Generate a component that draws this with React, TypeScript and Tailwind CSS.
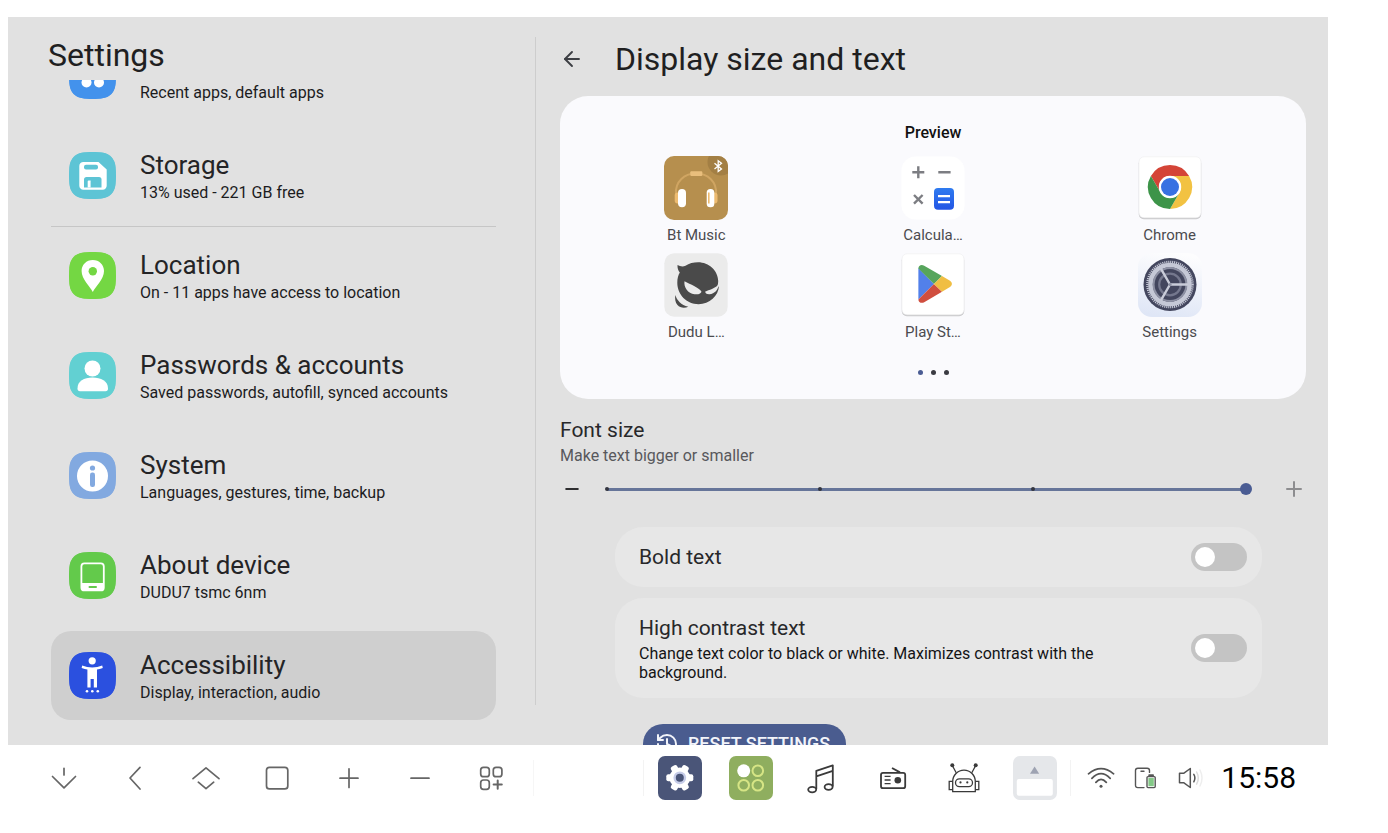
// App.tsx
import { useState, type ReactNode } from "react";
import { ArrowLeft, History, Minus, Plus } from "lucide-react";

/* ---------- Sidebar icons (47 x 47 tiles) ---------- */

const Tile = ({ color, children }: { color: string; children: ReactNode }) => (
  <svg viewBox="0 0 47 47" className="w-[47px] h-[47px] shrink-0" aria-hidden="true">
    <path
      d="M0 23.5C0 5 5 0 23.5 0S47 5 47 23.5 42 47 23.5 47 0 42 0 23.5Z"
      fill={color}
    />
    <rect x="0.5" y="0.5" width="46" height="46" rx="15" fill={color} />
    {children}
  </svg>
);

const AppsIcon = () => (
  <Tile color="#4392ec">
    <g fill="#fff">
      <circle cx="17.5" cy="17.5" r="5" />
      <circle cx="30" cy="17.5" r="5" />
      <circle cx="17.5" cy="30.5" r="5" />
      <circle cx="30" cy="30.5" r="5" />
    </g>
  </Tile>
);

const StorageIcon = () => (
  <Tile color="#5dc4d5">
    <path
      d="M14.5 10H29.5L37.7 17.5V33.5A4 4 0 0 1 33.7 37.7H14.5A4 4 0 0 1 10.3 33.5V14A4 4 0 0 1 14.5 10Z"
      fill="#fff"
    />
    <rect x="15" y="12.7" width="14" height="4.8" rx="2" fill="#5dc4d5" />
    <path d="M15 35.6V27.5Q15 25 17.5 25H30Q32.5 25 32.5 27.5V35.6Z" fill="#5dc4d5" />
    <path d="M18.7 35.6V29.5Q18.7 28.6 19.6 28.6H21.6V35.6Z" fill="#fff" />
  </Tile>
);

const LocationIcon = () => (
  <Tile color="#74d743">
    <path
      d="M23.8 8C17.4 8 12.6 12.8 12.6 19C12.6 27 21 34.5 23.8 40C26.6 34.5 35 27 35 19C35 12.8 30.2 8 23.8 8Z"
      fill="#fff"
    />
    <circle cx="23.8" cy="19.2" r="4.2" fill="#74d743" />
  </Tile>
);

const AccountIcon = () => (
  <Tile color="#62d0d2">
    <circle cx="23.5" cy="16.5" r="8" fill="#fff" />
    <path
      d="M8.5 36.5C8.5 29 15 25.5 23.5 25.5S39 29 39 36.5Q39 39.3 36.5 39.3H11Q8.5 39.3 8.5 36.5Z"
      fill="#fff"
    />
  </Tile>
);

const InfoIcon = () => (
  <Tile color="#82a9e0">
    <circle cx="23.5" cy="24" r="15.5" fill="#fff" />
    <circle cx="23.5" cy="16" r="2.6" fill="#82a9e0" />
    <rect x="21" y="20.5" width="5" height="14.5" rx="2.2" fill="#82a9e0" />
  </Tile>
);

const DeviceIcon = () => (
  <Tile color="#63ca4b">
    <rect x="12.4" y="11.4" width="22.4" height="27" rx="3" fill="#63ca4b" stroke="#fff" strokeWidth="1.8" />
    <path d="M12.4 31H34.8V36Q34.8 39 32 39H15.2Q12.4 39 12.4 36Z" fill="#fff" />
    <rect x="19.5" y="34" width="8.5" height="2" rx="1" fill="#63ca4b" />
  </Tile>
);

const AccessibilityIcon = () => (
  <Tile color="#2b50df">
    <g fill="#fff">
      <circle cx="23.2" cy="8.8" r="3.6" />
      <path d="M13.2 13.5Q18 15.6 23.2 15.6T33.2 13.5L33.8 15.9Q30.5 17.2 28 17.6V35.5H24.8V27H21.6V35.5H18.4V17.6Q15.9 17.2 12.6 15.9Z" />
      <circle cx="18" cy="39.3" r="1.3" />
      <circle cx="23.3" cy="39.3" r="1.3" />
      <circle cx="28.8" cy="39.3" r="1.3" />
    </g>
  </Tile>
);

/* ---------- Launcher preview icons (64 x 64) ---------- */

const BtMusic = () => (
  <svg viewBox="0 0 64 64" className="w-16 h-16" aria-hidden="true">
    <defs>
      <clipPath id="bt-clip">
        <rect width="64" height="64" rx="10" />
      </clipPath>
    </defs>
    <g clipPath="url(#bt-clip)">
      <rect width="64" height="64" fill="#b68f4e" />
      <circle cx="57" cy="6" r="13.5" fill="#a37f44" />
    </g>
    <path d="M12 38C11 26 20 17.6 32 17.6S53 26 52 38" fill="none" stroke="#d0a562" strokeWidth="2" />
    <rect x="26.3" y="15.3" width="12" height="4.7" rx="1" fill="#e9be7c" />
    <rect x="10.7" y="36.5" width="6" height="11" rx="3" fill="#edbb70" />
    <rect x="47.5" y="36.5" width="6" height="11" rx="3" fill="#edbb70" />
    <rect x="14" y="33" width="8" height="18.3" rx="4" fill="#fff" />
    <rect x="42.7" y="33" width="7.6" height="18.3" rx="3.6" fill="#fff" />
    <rect x="44" y="36.5" width="1.6" height="11" fill="#edbb70" />
    <path d="M50.5 7.2L57.5 13L54.2 15.5V4.8L57.5 7.3L50.5 13" fill="none" stroke="#fff" strokeWidth="1.3" />
  </svg>
);

const Calculator = () => (
  <svg viewBox="0 0 64 64" className="w-16 h-16" aria-hidden="true">
    <defs>
      <linearGradient id="calc" x1="0" y1="0" x2="0" y2="1">
        <stop offset="0" stopColor="#2f7bf0" />
        <stop offset="1" stopColor="#2355e4" />
      </linearGradient>
    </defs>
    <rect x="0.5" y="0.5" width="63" height="63" rx="14" fill="#fff" />
    <g stroke="#7c7d82" strokeWidth="2.4" fill="none">
      <path d="M11.3 16.3H23.3M17.3 10.3V22.3M37.3 16.3H49.6" />
      <path d="M13 39L21.6 47.6M21.6 39L13 47.6" />
    </g>
    <rect x="33" y="32" width="20" height="21.8" rx="4" fill="url(#calc)" />
    <path d="M37 40.2H49M37 46.2H49" stroke="#fff" strokeWidth="2.2" />
  </svg>
);

const WhiteCard = ({ children }: { children: ReactNode }) => (
  <svg viewBox="0 0 64 64" className="w-16 h-16" aria-hidden="true">
    <rect x="0.8" y="2.2" width="62.4" height="61" rx="5" fill="#c9c9cb" />
    <rect x="1" y="0.8" width="62" height="61" rx="5" fill="#fff" stroke="#ececee" strokeWidth="0.6" />
    {children}
  </svg>
);

const Chrome = () => (
  <WhiteCard>
    <path d="M12.9 20A22 22 0 0 1 51.1 20L32 20A11 11 0 0 0 22.5 36.5Z" fill="#d44437" />
    <path d="M51.1 20A22 22 0 0 1 32 53L41.5 36.5A11 11 0 0 0 32 20Z" fill="#f2c242" />
    <path d="M32 53A22 22 0 0 1 12.9 20L22.5 36.5A11 11 0 0 0 41.5 36.5Z" fill="#3d9449" />
    <circle cx="32" cy="31" r="11.2" fill="#fff" />
    <circle cx="32" cy="31" r="9" fill="#3871e2" />
  </WhiteCard>
);

const PlayStore = () => (
  <WhiteCard>
    <path d="M17.4 15V46.6L33 31Z" fill="#5280ea" />
    <path d="M17.4 15.5C17.4 12.5 20.5 11.2 23.2 12.8L41 23L33 31Z" fill="#57a55c" />
    <path d="M17.4 46.4C17.4 49.4 20.5 50.8 23.2 49.2L41 38.8L33 31Z" fill="#d04e3f" />
    <path d="M41 23L49 27.8C51.5 29.3 51.5 32.5 49 34L41 38.8L33 31Z" fill="#f0be43" />
  </WhiteCard>
);

const DuduLauncher = () => (
  <svg viewBox="0 0 64 64" className="w-16 h-16" aria-hidden="true">
    <rect x="0.3" y="0.3" width="63.4" height="63.4" rx="10" fill="#ebebeb" />
    <path
      d="M13.5 12C16 13.5 19 13.8 21.5 12.8C25 10.2 29.5 9.2 34 9.2C45 9.2 54 17.5 54.2 28C54.3 32 53 34.8 50.5 36.5C52.8 36 54.3 34.5 55 32.8C54.5 43 45.5 51.2 34.5 51.2C22.5 51.2 13.5 41.5 13.3 30C13.2 25.5 14.3 22 15.8 19.5C14.2 17.5 13.3 15 13.5 12Z"
      fill="#4a4a4a"
    />
    <path d="M20.5 28.3C27 31.5 34 34.5 37.3 38.2C37.8 40.5 34 41.6 30.5 41.2C24 40.5 19.5 34.5 20.5 28.3Z" fill="#ebebeb" />
    <path d="M41.3 38.5C45 37 51 35.5 54.6 31.5C54.5 36.5 50.5 41 45.5 41.2C42.5 41.3 41 40 41.3 38.5Z" fill="#ebebeb" />
    <path d="M11.3 42C13 47.5 17 51.8 24.3 53.8C20.5 55.5 16 55 13.5 52C11.2 49.5 10.8 45.5 11.3 42Z" fill="#4a4a4a" />
  </svg>
);

const SettingsApp = () => (
  <svg viewBox="0 0 64 64" className="w-16 h-16" aria-hidden="true">
    <defs>
      <linearGradient id="set-bg" x1="0.6" y1="0" x2="0.4" y2="1">
        <stop offset="0" stopColor="#fdfdfe" />
        <stop offset="1" stopColor="#dfe6f6" />
      </linearGradient>
    </defs>
    <rect width="64" height="64" rx="14" fill="url(#set-bg)" />
    <circle cx="32" cy="31.5" r="26.5" fill="#43465e" />
    <circle cx="32" cy="31.5" r="22.6" fill="none" stroke="#c5c8d6" strokeWidth="2.4" strokeDasharray="1.1 0.9" />
    <circle cx="32" cy="31.5" r="19.5" fill="none" stroke="#c5c8d6" strokeWidth="4.6" />
    <circle cx="32" cy="31.5" r="17.4" fill="#8d90a3" />
    <circle cx="32" cy="31.5" r="15.4" fill="#43465e" />
    <circle cx="32" cy="31.5" r="10.8" fill="none" stroke="#74778d" strokeWidth="2.2" />
    <path d="M32 31.5H50M32 31.5L23 15.9M32 31.5L23 47.1" stroke="#c9ccd9" strokeWidth="2.4" />
    <circle cx="32" cy="31.5" r="1.6" fill="#8d90a3" />
  </svg>
);

/* ---------- Taskbar icons ---------- */

const NavSvg = ({ children }: { children: ReactNode }) => (
  <svg
    viewBox="0 1 48 48"
    className="w-12 h-12"
    fill="none"
    stroke="#666"
    strokeWidth="1.7"
    strokeLinecap="round"
    strokeLinejoin="round"
    aria-hidden="true"
  >
    {children}
  </svg>
);

const NAV = [
  { label: "Hide bar", icon: <path d="M12.5 23.5L24 34.8L35.5 23.5M24 15.3V22" /> },
  { label: "Back", icon: <path d="M29 14.3L19 25L29 36" /> },
  { label: "Home", icon: <path d="M11 25.7L24 14.8L37 25.7M16.3 29.2L24 35.6L31.7 29.2" /> },
  { label: "Recents", icon: <rect x="13.5" y="14.3" width="21.3" height="21.6" rx="3" /> },
  { label: "Volume up", icon: <path d="M15 25.2H33M24 15.8V34.4" /> },
  { label: "Volume down", icon: <path d="M15 25.2H33" /> },
  {
    label: "All apps",
    icon: (
      <>
        <rect x="13.7" y="14.3" width="8.6" height="9.4" rx="2.8" />
        <rect x="26.3" y="14.3" width="8.6" height="9.4" rx="2.8" />
        <rect x="13.7" y="27" width="8.6" height="9.4" rx="2.8" />
        <path d="M26.6 31.6H34.8M30.7 27.5V35.7" strokeWidth="2" />
      </>
    ),
  },
];

const DockGear = () => (
  <svg viewBox="0 0 44 44" className="w-11 h-11" aria-hidden="true">
    <rect width="44" height="44" rx="7" fill="#4a5578" />
    <g fill="#fff">
      <circle cx="21.8" cy="21.8" r="10.3" />
      <rect x="8.3" y="18.3" width="27" height="7" rx="2" />
      <rect x="8.3" y="18.3" width="27" height="7" rx="2" transform="rotate(60 21.8 21.8)" />
      <rect x="8.3" y="18.3" width="27" height="7" rx="2" transform="rotate(120 21.8 21.8)" />
    </g>
    <circle cx="21.8" cy="21.8" r="5.2" fill="#4a5578" stroke="#c6cce8" strokeWidth="2.4" />
  </svg>
);

const DockApps = () => (
  <svg viewBox="0 0 44 44" className="w-11 h-11" aria-hidden="true">
    <rect width="44" height="44" rx="7" fill="#8fae5f" />
    <circle cx="14.7" cy="14.8" r="6.5" fill="#fff" />
    <g fill="none" stroke="#d6e585" strokeWidth="2">
      <circle cx="28.8" cy="14.8" r="5.3" />
      <circle cx="14.7" cy="29.2" r="5.3" />
      <circle cx="28.8" cy="29.2" r="5.3" />
    </g>
  </svg>
);

const DockMusic = () => (
  <svg viewBox="0 0 48 48" className="w-12 h-12" fill="none" stroke="#3a3a3a" strokeWidth="1.8" strokeLinejoin="round" aria-hidden="true">
    <path d="M18.3 35V16.8L34.8 11.3V32.6M18.3 22.3L34.8 16.8" />
    <ellipse cx="14.2" cy="35.6" rx="4" ry="2.8" />
    <ellipse cx="30.6" cy="33" rx="4" ry="2.8" />
  </svg>
);

const DockRadio = () => (
  <svg viewBox="0 0 48 48" className="w-12 h-12" fill="none" stroke="#3a3a3a" strokeWidth="1.8" aria-hidden="true">
    <rect x="12" y="18.8" width="24.2" height="15.4" rx="2" />
    <path d="M23 14L31 18.4" />
    <path d="M15.6 22.3H21.6M15.6 26H21.6M15.6 29.7H21.6" strokeWidth="1.3" />
    <circle cx="28.8" cy="26.3" r="3.3" fill="#3a3a3a" stroke="none" />
  </svg>
);

const DockRobot = () => (
  <svg viewBox="0 0 48 48" className="w-12 h-12" fill="none" stroke="#3a3a3a" strokeWidth="1.3" aria-hidden="true">
    <path d="M12.7 37.7V27.5A11.3 11.3 0 0 1 35.3 27.5V37.7Z" />
    <path d="M12.3 11.5L16.2 18.8M35.7 11.5L31.8 18.8" />
    <circle cx="12.3" cy="11.3" r="2" fill="#3a3a3a" stroke="none" />
    <circle cx="35.7" cy="11.3" r="2" fill="#3a3a3a" stroke="none" />
    <rect x="15.5" y="24.8" width="17" height="7.8" rx="3.9" />
    <circle cx="20.5" cy="28.4" r="1.1" fill="#3a3a3a" stroke="none" />
    <circle cx="27.3" cy="28.4" r="1.1" fill="#3a3a3a" stroke="none" />
    <path d="M12.7 27.3H9.2V35.6H12.7M35.3 27.3H38.8V35.6H35.3" />
  </svg>
);

const DockDrawer = () => (
  <svg viewBox="0 0 44 44" className="w-11 h-11" aria-hidden="true">
    <rect width="44" height="44" rx="7" fill="#e5e7ea" />
    <rect x="3.8" y="23" width="36" height="16.8" rx="2" fill="#fff" />
    <path d="M21.6 10.5L26.2 17.8H17Z" fill="#9ea3b2" />
  </svg>
);

const DOCK = [
  { label: "Settings", icon: <DockGear /> },
  { label: "App grid", icon: <DockApps /> },
  { label: "Music", icon: <DockMusic /> },
  { label: "Radio", icon: <DockRadio /> },
  { label: "Assistant", icon: <DockRobot /> },
  { label: "Drawer", icon: <DockDrawer /> },
];

const WifiIcon = () => (
  <svg viewBox="0 0 28 28" className="w-7 h-7" fill="none" stroke="#555" strokeWidth="1.7" strokeLinecap="round" aria-hidden="true">
    <path d="M1.5 9.8Q14 -0.6 26.6 9.8M4.9 14.3Q14 4.8 23.2 14.3M8.9 18.4Q14 12.2 19.3 18.4" />
    <circle cx="14" cy="22.3" r="1.5" fill="#555" stroke="none" />
  </svg>
);

const PhoneBatteryIcon = () => (
  <svg viewBox="0 0 24 28" className="w-6 h-7" fill="none" stroke="#555" strokeWidth="1.4" strokeLinecap="round" aria-hidden="true">
    <path d="M11 23.6H4.8Q2.5 23.6 2.5 21.3V6.5Q2.5 4.2 4.8 4.2H14.2Q16.5 4.2 16.5 6.5V8.4M8 7.2H11" />
    <path d="M16.2 11.2H20" strokeWidth="2" />
    <rect x="14" y="12.6" width="8.2" height="11" rx="1" />
    <rect x="15.4" y="14" width="5.4" height="8.2" fill="#83c987" stroke="none" />
  </svg>
);

const VolumeIcon = () => (
  <svg viewBox="0 0 28 28" className="w-7 h-7" fill="none" stroke="#555" strokeWidth="1.5" strokeLinecap="round" strokeLinejoin="round" aria-hidden="true">
    <path d="M4.5 9.3H8.6L15.3 4.5V23.5L8.6 18.7H4.5Z" />
    <path d="M18.8 10.4Q21 14 18.8 17.8" />
    <path d="M21.6 8Q25 14 21.6 20.2" stroke="#ddd" />
    <path d="M25 6Q29 14 25 22" stroke="#eee" />
  </svg>
);

/* ---------- Data ---------- */

const MENU = [
  { id: "apps", title: "", note: "Recent apps, default apps", icon: <AppsIcon /> },
  { id: "storage", title: "Storage", note: "13% used - 221 GB free", icon: <StorageIcon />, divider: true },
  { id: "location", title: "Location", note: "On - 11 apps have access to location", icon: <LocationIcon /> },
  { id: "accounts", title: "Passwords & accounts", note: "Saved passwords, autofill, synced accounts", icon: <AccountIcon /> },
  { id: "system", title: "System", note: "Languages, gestures, time, backup", icon: <InfoIcon /> },
  { id: "about", title: "About device", note: "DUDU7 tsmc 6nm", icon: <DeviceIcon /> },
  { id: "accessibility", title: "Accessibility", note: "Display, interaction, audio", icon: <AccessibilityIcon /> },
];

const PREVIEW_APPS = [
  { name: "Bt Music", icon: <BtMusic /> },
  { name: "Calcula…", icon: <Calculator /> },
  { name: "Chrome", icon: <Chrome /> },
  { name: "Dudu L…", icon: <DuduLauncher /> },
  { name: "Play St…", icon: <PlayStore /> },
  { name: "Settings", icon: <SettingsApp /> },
];

/* ---------- Pieces ---------- */

interface ToggleRowProps {
  id: string;
  title: string;
  note?: string;
}

const ToggleRow = ({ id, title, note }: ToggleRowProps) => {
  const [on, setOn] = useState(false);

  return (
    <div className="flex items-center gap-8 py-4 pl-6 pr-[15px] rounded-[28px] bg-[#e7e7e7]">
      <label htmlFor={id} className="flex-1 min-w-0">
        <span className="block text-[21px] leading-7 text-[#28282a]">{title}</span>
        {note && <span className="block mt-0.5 text-base leading-[19px] text-[#141416]">{note}</span>}
      </label>
      <input
        id={id}
        type="checkbox"
        checked={on}
        onChange={(e) => setOn(e.target.checked)}
        className="relative appearance-none shrink-0 w-14 h-7 rounded-full bg-[#c4c4c4] checked:bg-[#4a5b8f] before:absolute before:left-1 before:top-1 before:size-5 before:rounded-full before:bg-white checked:before:left-8"
      />
    </div>
  );
};

const Sidebar = () => {
  const [active, setActive] = useState("accessibility");

  return (
    <aside className="w-2/5 flex flex-col min-h-0">
      <h1 className="h-[63px] shrink-0 pt-[18px] pl-10 text-[32px] leading-10 text-[#1f1f21]">
        Settings
      </h1>
      {/* list is scrolled to its end, so the first row runs under the title */}
      <nav className="flex-1 min-h-0 overflow-hidden flex flex-col justify-end gap-[11px] pl-[43px] pr-10 pb-[25px]">
        {MENU.map((m) => (
          <div key={m.id} className="relative shrink-0">
            <button
              onClick={() => setActive(m.id)}
              className={`w-full h-[89px] flex items-center gap-6 pl-[18px] rounded-[20px] text-left ${
                m.id === active ? "bg-[#cfcfcf]" : ""
              }`}
            >
              {m.icon}
              <span className="min-w-0">
                <span className="block h-[30px] text-[26px] leading-[30px] text-[#242426]">{m.title}</span>
                <span className="block mt-1 text-base leading-[18px] text-[#1c1c1e]">{m.note}</span>
              </span>
            </button>
            {m.divider && <div className="absolute inset-x-0 -bottom-[7px] h-px bg-[#c6c6c6]" />}
          </div>
        ))}
      </nav>
    </aside>
  );
};

const FontSlider = () => {
  const [size, setSize] = useState(3);

  return (
    <div className="flex items-center h-6 mt-[9px]">
      <button
        aria-label="Smaller"
        onClick={() => setSize(Math.max(0, size - 1))}
        className="w-6 h-6 flex items-center justify-center mr-[17px] text-[#2e2e30]"
      >
        <Minus size={20} strokeWidth={2.4} />
      </button>
      <div className="relative flex-1 h-6 flex items-center">
        <div className="absolute inset-x-1.5 h-[3px] bg-[#667599]" />
        <div className="absolute inset-x-1 flex justify-between">
          <i className="size-1 rounded-full bg-[#33353f]" />
          <i className="size-1 rounded-full bg-[#33353f]" />
          <i className="size-1 rounded-full bg-[#33353f]" />
          <i className="size-1 rounded-full bg-[#33353f]" />
        </div>
        <input
          id="font-size"
          type="range"
          min={0}
          max={3}
          value={size}
          onChange={(e) => setSize(Number(e.target.value))}
          className="relative w-full h-6 appearance-none bg-transparent [&::-webkit-slider-thumb]:appearance-none [&::-webkit-slider-thumb]:size-3 [&::-webkit-slider-thumb]:rounded-full [&::-webkit-slider-thumb]:bg-[#4a5c93]"
        />
      </div>
      <button
        aria-label="Larger"
        onClick={() => setSize(Math.min(3, size + 1))}
        className="w-6 h-6 flex items-center justify-center ml-[30px] text-[#8d8d8f]"
      >
        <Plus size={24} strokeWidth={2} />
      </button>
    </div>
  );
};

const DetailPane = () => (
  <main className="flex-1 min-w-0 min-h-0 overflow-hidden pl-6 pr-[22px]">
    <header className="h-[79px] flex items-center pt-1">
      <button aria-label="Back" className="w-6 h-6 flex items-center justify-center mr-[31px] text-[#3d3f44]">
        <ArrowLeft size={24} strokeWidth={1.9} />
      </button>
      <h2 className="text-[32px] leading-10 text-[#1f1f21]">Display size and text</h2>
    </header>

    <section className="rounded-[28px] bg-[#fafafd] pt-[25px] pb-6 px-[18px]">
      <h3 className="text-center text-base leading-6 font-medium text-[#111]">Preview</h3>
      <div className="grid grid-cols-3 gap-y-[7px] mt-[11px]">
        {PREVIEW_APPS.map((a) => (
          <div key={a.name} className="flex flex-col items-center">
            {a.icon}
            <span className="mt-[5px] text-[15px] leading-[21px] text-[#4b4b4f]">{a.name}</span>
          </div>
        ))}
      </div>
      <div className="flex justify-center gap-2 mt-[27px]">
        <i className="size-[5px] rounded-full bg-[#4a5c93]" />
        <i className="size-[5px] rounded-full bg-[#3a3b42]" />
        <i className="size-[5px] rounded-full bg-[#3a3b42]" />
      </div>
    </section>

    <section className="mt-[17px]">
      <label htmlFor="font-size" className="block text-[21px] leading-7 text-[#28282a]">
        Font size
      </label>
      <p className="text-base leading-6 text-[#58585c]">Make text bigger or smaller</p>
      <FontSlider />
    </section>

    <div className="flex flex-col gap-[11px] mt-[26px] ml-[55px] mr-11">
      <ToggleRow id="bold-text" title="Bold text" />
      <ToggleRow
        id="high-contrast"
        title="High contrast text"
        note="Change text color to black or white. Maximizes contrast with the background."
      />
    </div>

    <button className="mt-[26px] ml-[83px] h-10 pl-3 pr-4 flex items-center gap-[9px] rounded-[20px] bg-[#4a5c8f] text-[#f2f4fa] text-lg leading-6 font-medium">
      <History size={24} strokeWidth={2} />
      RESET SETTINGS
    </button>
  </main>
);

const Taskbar = () => (
  <footer className="h-[65px] shrink-0 flex items-center justify-between">
    <div className="w-[526px] h-9 flex items-center pl-5 pr-1.5 border-r border-[#f6f6f6]">
      <div className="flex-1 grid grid-cols-7 justify-items-center">
        {NAV.map((n) => (
          <button key={n.label} aria-label={n.label}>
            <NavSvg>{n.icon}</NavSvg>
          </button>
        ))}
      </div>
    </div>

    <div className="flex items-center">
      <div className="w-[428px] h-9 flex items-center border-x border-[#f3f3f3]">
        <div className="flex-1 grid grid-cols-6 items-center justify-items-center">
          {DOCK.map((d) => (
            <button key={d.label} aria-label={d.label}>
              {d.icon}
            </button>
          ))}
        </div>
      </div>
      <div className="flex items-center gap-[18px] pl-4 pr-8">
        <WifiIcon />
        <PhoneBatteryIcon />
        <VolumeIcon />
        <time className="text-[30px] leading-9 text-black">15:58</time>
      </div>
    </div>
  </footer>
);

export default function App() {
  return (
    <div
      className="h-screen flex flex-col overflow-hidden bg-white pt-[17px] pb-[23px] pl-2 pr-[60px]"
      style={{ fontFamily: "Roboto, sans-serif" }}
    >
      <div className="flex-1 min-h-0 flex bg-[#e1e1e1]">
        <Sidebar />
        <div className="w-px shrink-0 -ml-px mt-5 mb-10 bg-[#cdcdcd]" />
        <DetailPane />
      </div>
      <Taskbar />
    </div>
  );
}
